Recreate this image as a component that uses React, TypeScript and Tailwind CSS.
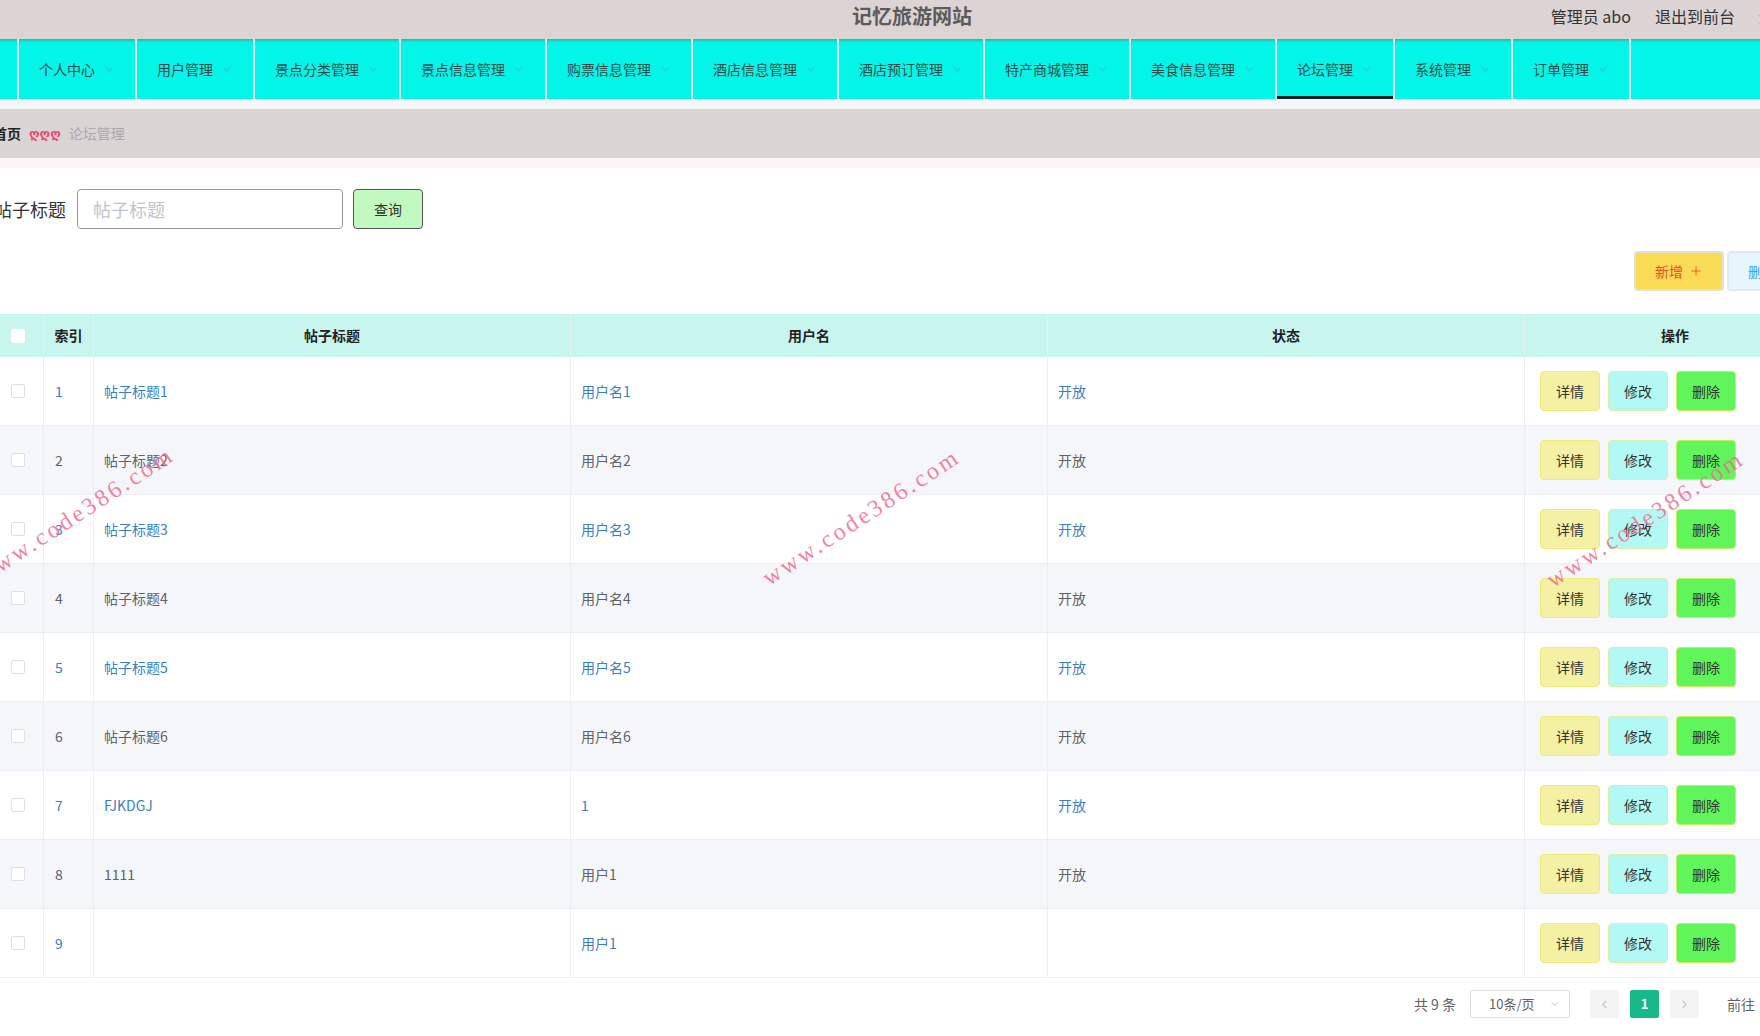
import { ChevronDown, ChevronLeft, ChevronRight, Plus, Trash2 } from "lucide-react";

const navItems = [
  "个人中心",
  "用户管理",
  "景点分类管理",
  "景点信息管理",
  "购票信息管理",
  "酒店信息管理",
  "酒店预订管理",
  "特产商城管理",
  "美食信息管理",
  "论坛管理",
  "系统管理",
  "订单管理",
];

const rows = [
  { id: 1, title: "帖子标题1", user: "用户名1", status: "开放" },
  { id: 2, title: "帖子标题2", user: "用户名2", status: "开放" },
  { id: 3, title: "帖子标题3", user: "用户名3", status: "开放" },
  { id: 4, title: "帖子标题4", user: "用户名4", status: "开放" },
  { id: 5, title: "帖子标题5", user: "用户名5", status: "开放" },
  { id: 6, title: "帖子标题6", user: "用户名6", status: "开放" },
  { id: 7, title: "FJKDGJ", user: "1", status: "开放" },
  { id: 8, title: "1111", user: "用户1", status: "开放" },
  { id: 9, title: "", user: "用户1", status: "" },
];

function Watermark({ className }: { className: string }) {
  return (
    <div
      className={`pointer-events-none absolute -translate-x-1/2 -translate-y-1/2 -rotate-[33deg] whitespace-nowrap text-[24px] tracking-[3px] text-[#f26a8e]/85 ${className}`}
      style={{ fontFamily: '"Liberation Serif", serif' }}
    >
      www.code386.com
    </div>
  );
}

function Checkbox({ header }: { header?: boolean }) {
  return (
    <span
      className={`inline-block h-[14px] w-[14px] rounded-[2px] bg-white ${
        header ? "" : "border border-[#dcdfe6]"
      }`}
    />
  );
}

export default function App() {
  return (
    <div
      className="relative h-[1036px] w-[1760px] overflow-hidden bg-white text-[#333]"
      style={{ fontFamily: '"Noto Sans CJK SC", "Noto Sans", sans-serif' }}
    >
      <div className="-ml-[9px] w-[1840px]">
        {/* top bar */}
        <header className="grid h-[39px] grid-cols-[1fr_auto_1fr] items-center bg-[#dcd4d4] pb-[8px]">
          <div />
          <div className="pl-[2px] text-[20px] font-bold text-[#5b5b5b]">记忆旅游网站</div>
          <div className="flex items-center justify-end gap-[24px] pr-[8px] text-[16px] text-[#333]">
            <span>管理员 abo</span>
            <span>退出到前台</span>
            <span>退出登录</span>
          </div>
        </header>

        {/* nav */}
        <nav className="flex h-[60px] bg-[#03f5e7] pl-[26px] shadow-[inset_0_2px_2px_rgba(80,100,100,0.35)]">
          {navItems.map((item, i) => (
            <div
              key={item}
              className={`relative flex h-full items-center gap-[8px] border-l-2 border-[#d9eeee] px-[20px] text-[14px] text-[#2c4d4a] ${
                i === navItems.length - 1 ? "border-r-2" : ""
              }`}
            >
              <span>{item}</span>
              <ChevronDown size={12} strokeWidth={1.5} className="text-[#6e90b4]" />
              {item === "论坛管理" && (
                <span className="absolute bottom-0 left-0 right-0 h-[3px] bg-[#0b2623]" />
              )}
            </div>
          ))}
        </nav>
        <div className="h-[10px] bg-[#f4f6f8]" />

        {/* breadcrumb */}
        <div className="flex h-[49px] items-center gap-[8px] bg-[#dbd4d5] pl-[2px] text-[14px]">
          <span className="font-bold text-[#222]">首页</span>
          <span
            className="text-[13px] font-bold text-[#e84a72]"
            style={{ fontFamily: '"DejaVu Sans", sans-serif' }}
          >
            ღღღ
          </span>
          <span className="text-[#a8a8b0]">论坛管理</span>
        </div>
        <div className="h-[10px] bg-[#f9f4f5]" />

        {/* search */}
        <div className="mt-[21px] flex items-center pl-[3px]">
          <span className="text-[18px] text-[#333]">帖子标题</span>
          <div className="ml-[11px] flex h-[40px] w-[266px] items-center rounded-[4px] border border-[#9a9a9a] pl-[15px] text-[18px] text-[#c0c4cc]">
            帖子标题
          </div>
          <button className="ml-[10px] h-[40px] w-[70px] rounded-[4px] border border-[#555] bg-[#c2f9c0] text-[14px] text-[#333]">
            查询
          </button>
        </div>

        {/* actions */}
        <div className="mt-[22px] flex justify-end gap-[3px] pr-[14px]">
          <button className="flex h-[40px] w-[90px] items-center justify-center gap-[6px] rounded-[4px] border-2 border-[#e6e1cf] bg-[#fadb55] text-[14px] text-[#e4502a]">
            新增
            <Plus size={14} strokeWidth={1.5} />
          </button>
          <button className="flex h-[40px] w-[90px] items-center justify-center gap-[6px] rounded-[4px] border-2 border-[#dfeaf0] bg-[#e6f6fc] text-[14px] text-[#409eff]">
            删除
            <Trash2 size={14} strokeWidth={1.5} />
          </button>
        </div>

        {/* table */}
        <div className="mt-[23px] w-[1834px] text-[14px]">
          <div className="grid h-[43px] grid-cols-[53px_50px_477px_477px_477px_300px] bg-[#c8f5ed] font-bold text-[#222]">
            <div className="flex items-center justify-center border-r border-[#e4f2ef] pl-[2px]">
              <Checkbox header />
            </div>
            <div className="flex items-center justify-center border-r border-[#e4f2ef]">索引</div>
            <div className="flex items-center justify-center border-r border-[#e4f2ef]">帖子标题</div>
            <div className="flex items-center justify-center border-r border-[#e4f2ef]">用户名</div>
            <div className="flex items-center justify-center border-r border-[#e4f2ef]">状态</div>
            <div className="flex items-center justify-center">操作</div>
          </div>
          {rows.map((r) => {
            const odd = r.id % 2 === 1;
            const text = odd ? "text-[#3a7fc1]" : "text-[#5f6266]";
            return (
              <div
                key={r.id}
                className={`grid h-[69px] grid-cols-[53px_50px_477px_477px_477px_300px] border-b border-[#ebeef5] ${
                  odd ? "bg-white" : "bg-[#f5f6f9]"
                } ${text}`}
              >
                <div className="flex items-center justify-center border-r border-[#ebeef5] pl-[2px]">
                  <Checkbox />
                </div>
                <div className="flex items-center border-r border-[#ebeef5] pl-[11px]">{r.id}</div>
                <div className="flex items-center border-r border-[#ebeef5] pl-[10px]">{r.title}</div>
                <div className="flex items-center border-r border-[#ebeef5] pl-[10px]">{r.user}</div>
                <div className="flex items-center border-r border-[#ebeef5] pl-[10px]">{r.status}</div>
                <div className="flex items-center gap-[8px] pl-[15px] text-[#333]">
                  <button className="h-[40px] w-[60px] rounded-[4px] border border-[#ecec7a] bg-[#f4f0a4]">
                    详情
                  </button>
                  <button className="h-[40px] w-[60px] rounded-[4px] border border-[#d6f0a8] bg-[#b2f8f4]">
                    修改
                  </button>
                  <button className="h-[40px] w-[60px] rounded-[4px] border border-[#c4ee5c] bg-[#5ff55b]">
                    删除
                  </button>
                </div>
              </div>
            );
          })}
        </div>

        {/* pagination */}
        <div className="mt-[12px] flex h-[28px] items-center justify-end text-[13px] text-[#606266]">
          <span className="text-[14px]">共 9 条</span>
          <div className="ml-[14px] flex h-[28px] w-[100px] items-center justify-between rounded-[3px] border border-[#dcdfe6] pl-[18px] pr-[8px]">
            <span>10条/页</span>
            <ChevronDown size={12} className="text-[#c0c4cc]" />
          </div>
          <div className="ml-[20px] flex h-[28px] w-[29px] items-center justify-center rounded-[2px] bg-[#f4f4f5] text-[#c0c4cc]">
            <ChevronLeft size={13} />
          </div>
          <div className="ml-[11px] flex h-[28px] w-[29px] items-center justify-center rounded-[2px] bg-[#17b98b] font-bold text-white">
            1
          </div>
          <div className="ml-[11px] flex h-[28px] w-[29px] items-center justify-center rounded-[2px] bg-[#f4f4f5] text-[#c0c4cc]">
            <ChevronRight size={13} />
          </div>
          <span className="ml-[28px] text-[14px]">前往</span>
          <div className="ml-[8px] h-[28px] w-[46px] rounded-[3px] border border-[#dcdfe6]" />
          <span className="ml-[8px] text-[14px]">页</span>
        </div>
      </div>

      <Watermark className="left-[75px] top-[515px]" />
      <Watermark className="left-[861px] top-[517px]" />
      <Watermark className="left-[1645px] top-[519px]" />
    </div>
  );
}
